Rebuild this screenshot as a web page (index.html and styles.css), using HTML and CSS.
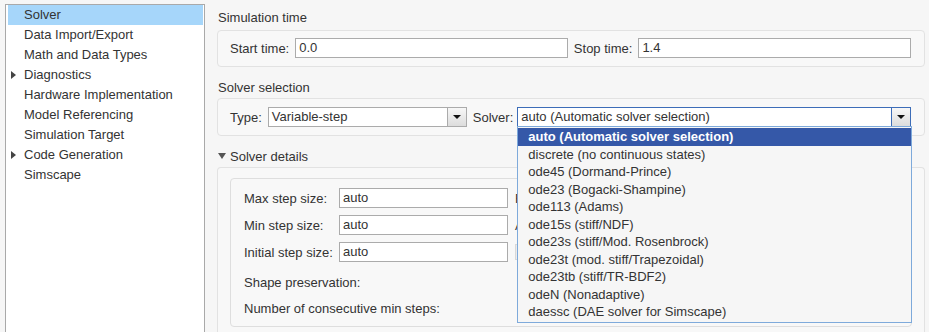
FILE: index.html
```html
<!DOCTYPE html>
<html lang="en">
<head>
  <meta charset="UTF-8" />
  <title>Configuration Parameters - Solver</title>
  <link rel="stylesheet" href="styles.css">
</head>
<body>
  <div class="nav">
    <div class="nav-item selected">Solver</div>
    <div class="nav-item">Data Import/Export</div>
    <div class="nav-item">Math and Data Types</div>
    <div class="nav-item"><span class="caret"></span>Diagnostics</div>
    <div class="nav-item">Hardware Implementation</div>
    <div class="nav-item">Model Referencing</div>
    <div class="nav-item">Simulation Target</div>
    <div class="nav-item"><span class="caret"></span>Code Generation</div>
    <div class="nav-item">Simscape</div>
  </div>

  <div class="main">
    <div class="group-title">Simulation time</div>
    <div class="group time-group">
      <label class="field-label">Start time:</label>
      <div class="text-input grow">0.0</div>
      <label class="field-label next">Stop time:</label>
      <div class="text-input grow">1.4</div>
    </div>

    <div class="group-title spaced">Solver selection</div>
    <div class="group solver-group">
      <label class="field-label">Type:</label>
      <div class="select type-select">
        <div class="select-value">Variable-step</div>
        <div class="select-btn"><span class="arrow"></span></div>
      </div>
      <label class="field-label next">Solver:</label>
      <div class="select solver-select focused">
        <div class="select-value">auto (Automatic solver selection)</div>
        <div class="select-btn"><span class="arrow"></span></div>
        <ul class="dropdown">
          <li class="active">auto (Automatic solver selection)</li>
          <li>discrete (no continuous states)</li>
          <li>ode45 (Dormand-Prince)</li>
          <li>ode23 (Bogacki-Shampine)</li>
          <li>ode113 (Adams)</li>
          <li>ode15s (stiff/NDF)</li>
          <li>ode23s (stiff/Mod. Rosenbrock)</li>
          <li>ode23t (mod. stiff/Trapezoidal)</li>
          <li>ode23tb (stiff/TR-BDF2)</li>
          <li>odeN (Nonadaptive)</li>
          <li>daessc (DAE solver for Simscape)</li>
        </ul>
      </div>
    </div>

    <div class="group-title spaced"><span class="down-caret"></span>Solver details</div>
    <div class="group details-group">
      <div class="details-inner">
        <div class="detail-row">
          <span class="detail-label">Max step size:</span>
          <div class="text-input detail-input">auto</div>
          <span class="detail-extra">Relative tolerance:</span>
        </div>
        <div class="detail-row">
          <span class="detail-label">Min step size:</span>
          <div class="text-input detail-input">auto</div>
          <span class="detail-extra">Absolute tolerance:</span>
        </div>
        <div class="detail-row">
          <span class="detail-label">Initial step size:</span>
          <div class="text-input detail-input">auto</div>
          <span class="disabled-box"></span>
        </div>
        <div class="detail-row loose">
          <span class="detail-label wide">Shape preservation:</span>
        </div>
        <div class="detail-row last">
          <span class="detail-label wide">Number of consecutive min steps:</span>
        </div>
      </div>
    </div>
  </div>
</body>
</html>
```

FILE: styles.css
```css
html, body {
  height: 100%;
}
body {
  margin: 0;
  padding: 4px 0 0 5px;
  box-sizing: border-box;
  font-family: "Liberation Sans", Arial, sans-serif;
  font-size: 13px;
  color: #333;
  background: #f6f6f6;
  display: flex;
  overflow: hidden;
}
.nav {
  width: 200px;
  flex: none;
  box-sizing: border-box;
  height: 340px;
  background: #fff;
  border: 1px solid #a9a9a9;
  border-bottom: none;
  padding: 0 1px 0 2px;
}
.nav-item {
  height: 20px;
  line-height: 20px;
  padding-left: 16px;
  white-space: nowrap;
}
.nav-item.selected {
  background: #a6d6fa;
}
.caret {
  display: inline-block;
  width: 0;
  height: 0;
  margin-left: -13px;
  margin-right: 8px;
  vertical-align: 0;
  border-top: 4px solid transparent;
  border-bottom: 4px solid transparent;
  border-left: 5px solid #444;
}
.main {
  flex: 1;
  padding: 4px 4px 0 12px;
  min-width: 0;
}
.group-title {
  height: 20px;
  line-height: 20px;
  margin-left: 1px;
  margin-bottom: 2px;
}
.group-title.spaced {
  margin-top: 11px;
  margin-bottom: 0;
}
.down-caret {
  display: inline-block;
  width: 0;
  height: 0;
  margin-right: 4px;
  vertical-align: 2px;
  border-left: 4px solid transparent;
  border-right: 4px solid transparent;
  border-top: 6px solid #555;
}
.group {
  background: #f8f8f8;
  border: 1px solid #e2e2e2;
  border-radius: 4px;
  padding: 7px 13px 8px 12px;
  display: flex;
  align-items: center;
}
.solver-group {
  padding-top: 8px;
}
.field-label {
  margin-right: 6px;
  white-space: nowrap;
}
.field-label.next {
  margin-left: 6px;
}
.solver-group .field-label.next {
  margin-left: 6px;
  margin-right: 4px;
}
.text-input {
  height: 20px;
  box-sizing: border-box;
  border: 1px solid #ababab;
  background: #fff;
  padding: 0 3px;
  line-height: 18px;
  color: #333;
  white-space: nowrap;
}
.grow {
  flex: 1;
}
.select {
  height: 20px;
  box-sizing: border-box;
  border: 1px solid #ababab;
  background: #fff;
  display: flex;
  position: relative;
}
.type-select {
  width: 199px;
}
.solver-select {
  flex: 1;
}
.select.focused {
  border-color: #3d6db8;
}
.select-value {
  flex: 1;
  padding: 0 3px;
  line-height: 18px;
  white-space: nowrap;
}
.select-btn {
  width: 18px;
  border-left: 1px solid #ababab;
  background: linear-gradient(#f7f7f7, #dcdcdc);
  display: flex;
  align-items: center;
  justify-content: center;
}
.focused .select-btn {
  border-left-color: #3d6db8;
}
.arrow {
  width: 0;
  height: 0;
  border-left: 4px solid transparent;
  border-right: 4px solid transparent;
  border-top: 4px solid #111;
}
.dropdown {
  position: absolute;
  top: 18px;
  left: -1px;
  right: -2px;
  margin: 0;
  padding: 1px 0;
  list-style: none;
  background: #f6f6f6;
  border: 1px solid #7eaadb;
  z-index: 10;
}
.dropdown li {
  height: 17.5px;
  line-height: 17.5px;
  padding-left: 10px;
  white-space: nowrap;
}
.dropdown li.active {
  background: #3558a8;
  color: #fff;
  font-weight: bold;
}
.details-group {
  display: block;
  padding: 10px 12px 0 12px;
  height: 200px;
  border-bottom: none;
  border-radius: 4px 4px 0 0;
}
.details-inner {
  border: 1px solid #dedede;
  border-radius: 4px;
  padding: 9px 13px 8px 13px;
}
.detail-row {
  display: flex;
  align-items: center;
  height: 20px;
  margin-top: 7px;
}
.detail-row:first-child {
  margin-top: 0;
}
.detail-row.loose {
  margin-top: 10px;
}
.detail-row.last {
  margin-top: 6px;
}
.detail-label {
  width: 95px;
  flex: none;
  white-space: nowrap;
}
.detail-label.wide {
  width: auto;
}
.detail-input {
  width: 169px;
  flex: none;
}
/* these labels run on under the open solver list */
.detail-extra {
  margin-left: 7px;
  white-space: nowrap;
}
.disabled-box {
  margin-left: 7px;
  width: 16px;
  height: 14px;
  border: 1px solid #d8d8d8;
  background: #ececec;
}
```
